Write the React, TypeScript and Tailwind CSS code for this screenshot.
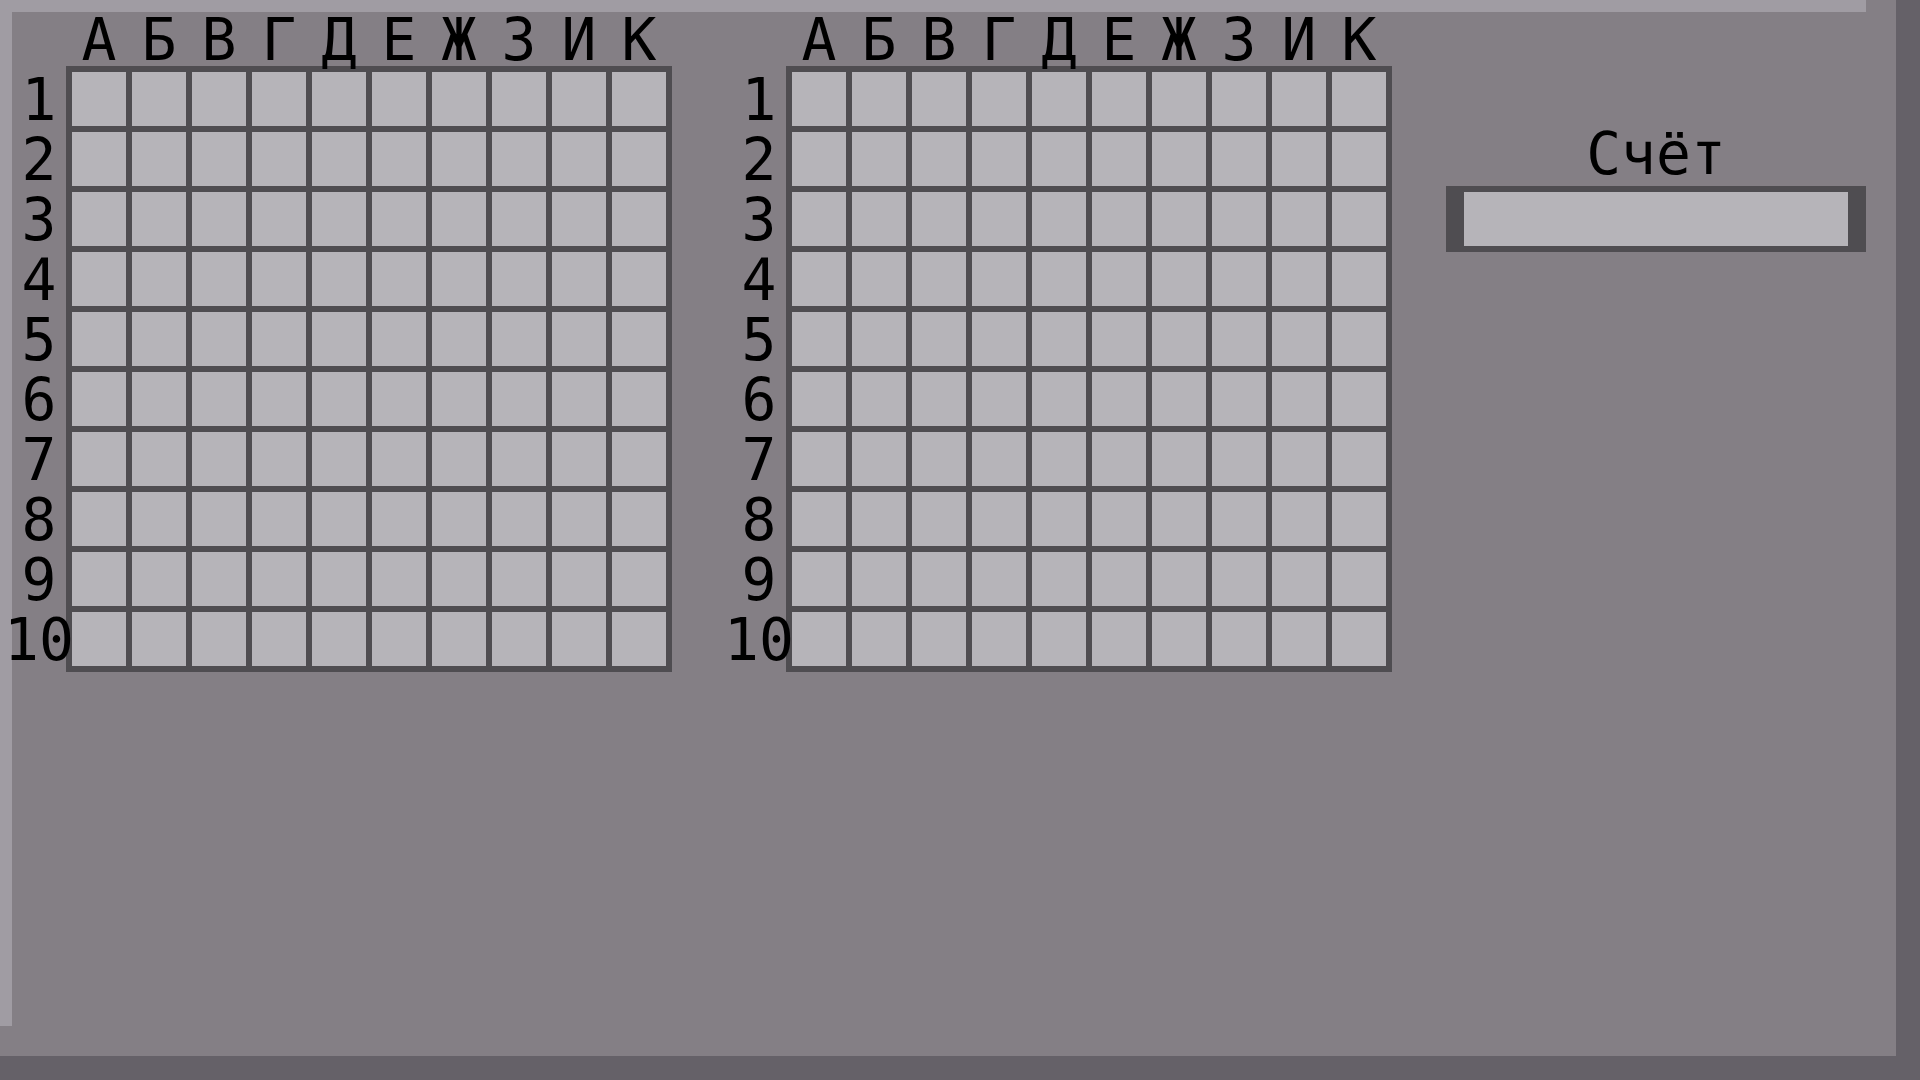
import React from "react";

const COLUMNS = ["А", "Б", "В", "Г", "Д", "Е", "Ж", "З", "И", "К"];
const ROWS = [1, 2, 3, 4, 5, 6, 7, 8, 9, 10];

function Board({ name }: { name: string }) {
  return (
    <table
      aria-label={name}
      className="w-[660px] shrink-0 table-fixed border-collapse text-[58px] leading-[56px]"
    >
      <colgroup>
        <col className="w-[57px]" />
        {COLUMNS.map((c) => (
          <col key={c} className="w-[60px]" />
        ))}
      </colgroup>
      <thead>
        <tr className="h-[57px]">
          <td className="p-0" />
          {COLUMNS.map((c) => (
            <th key={c} scope="col" className="p-0 font-normal">
              <div className="flex h-[54px] justify-center">{c}</div>
            </th>
          ))}
        </tr>
      </thead>
      <tbody>
        {ROWS.map((r) => (
          <tr key={r} className="h-[60px]">
            <th scope="row" className="p-0 font-normal">
              <div className="flex h-[54px] justify-center">{r}</div>
            </th>
            {COLUMNS.map((c) => (
              <td key={c} className="border-[6px] border-[#4f4d51] bg-[#b6b4b9] p-0">
                <button
                  type="button"
                  aria-label={`${c}${r}`}
                  className="block h-[54px] w-full"
                />
              </td>
            ))}
          </tr>
        ))}
      </tbody>
    </table>
  );
}

export default function App() {
  return (
    <div className="flex min-h-screen flex-col border-r-[24px] border-b-[24px] border-[#656168] bg-[#847f85] font-['DejaVu_Sans_Mono',monospace] text-black">
      <div className="mr-[30px] h-3 bg-[#a09ca3]" />
      <div className="flex flex-1">
        <div className="mb-[30px] w-3 shrink-0 bg-[#a09ca3]" />
        <main className="flex flex-1 items-start pr-[30px]">
          <div className="flex gap-[60px]">
            <Board name="Моё поле" />
            <Board name="Поле противника" />
          </div>
          <section className="ml-[54px] flex min-w-0 flex-1 flex-col pt-[114px]">
            <label htmlFor="score" className="pb-1 text-center text-[58px] leading-[56px]">
              Счёт
            </label>
            <input
              id="score"
              readOnly
              className="h-[66px] w-full border-x-[18px] border-y-[6px] border-[#4f4d51] bg-[#b6b4b9] text-center text-[40px] outline-none"
            />
          </section>
        </main>
      </div>
    </div>
  );
}
